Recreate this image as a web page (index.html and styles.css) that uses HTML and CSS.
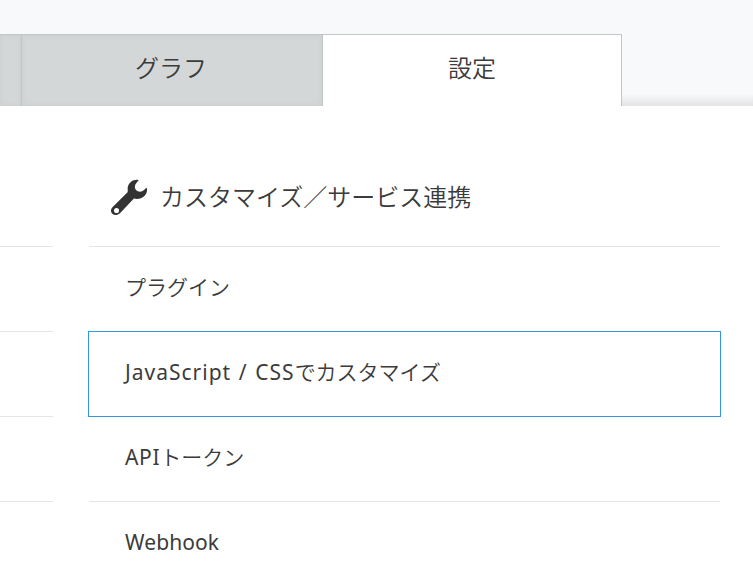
FILE: index.html
```html
<!DOCTYPE html>
<html lang="ja">
<head>
<meta charset="utf-8">
<title>設定</title>
<link rel="stylesheet" href="styles.css">
</head>
<body>
<nav class="tabs">
<div class="tab tab-first"></div>
<div class="tab"><span class="graph-label">グラフ</span></div>
<div class="tab active"><span>設定</span></div>
<div class="tab-space"></div>
</nav>
<main class="panel">
<section class="side"><div class="head"></div><div class="row"></div><div class="row"></div><div class="row"></div></section>
<section class="main">
<h2 class="head"><svg class="wrench" viewBox="0 0 40 40"><path fill-rule="evenodd" d="M29.500 2.200C25 .8 19.500 4 18.300 9c-.4 2 .2 4-.3 5.500L3 29.500c-4 4-1.500 8.500 3 8.500 2 0 3.500-1 5-2.500L24.500 21c3 1 7 .5 9.500-1.500 3.500-2.500 4.500-6 3.800-9.500-2.300 1-3.600 4-7.100 4-3 0-5.200-2-5.200-5 0-3 2.500-5 4-6.800zM6.700 30.700a2.600 2.600 0 1 0 0 5.200 2.600 2.600 0 0 0 0-5.200z" fill="#333"/></svg><span>カスタマイズ／サービス連携</span></h2>
<a class="row"><span>プラグイン</span></a>
<a class="row selected"><span><span class="latin script">JavaScript / CSS</span>でカスタマイズ</span></a>
<a class="row"><span><span class="latin api">API</span>トークン</span></a>
<a class="row last"><span class="latin hook">Webhook</span></a>
</section>
</main>
</body>
</html>
```
FILE: styles.css
```css
*{box-sizing:border-box}
body{margin:0;width:753px;height:579px;overflow:hidden;background:#f7f9fb;color:#3b3b3b;font-family:"Noto Sans CJK JP",sans-serif;font-weight:350}
.tabs{display:flex;height:106px;padding-top:34px}
.tab{width:301px;height:72px;background:#d4d7d7;border-top:1px solid #c4c7c8;border-right:1px solid #c2c6c6;box-shadow:inset 0 0 5px #c9cdcd;display:flex;align-items:center;justify-content:center;padding-bottom:8px;font-size:24px;white-space:nowrap}
.tab-first{width:22px}
.graph-label{margin-right:2px}
.tab.active{background:#fff;width:299px;box-shadow:none}
.tab-space{flex:1;background:linear-gradient(to bottom,transparent 83%,#e1e3e4)}
.panel{height:473px;background:#fff;display:flex;gap:36px}
.side{width:53px}
.main{width:631px}
.head{margin:0;height:141px;border-bottom:1px solid #e3e6e6;display:flex;align-items:center;padding:38px 0 0 21px;font-size:24px;font-weight:350;white-space:nowrap}
.side .head{padding:0}
.wrench{width:39px;height:39px;margin:4px 11px 0 0}
.row{height:85px;border-bottom:1px solid #e3e6e6;display:flex;align-items:center;padding:0 0 6px 36px;font-size:21px;white-space:nowrap}
.side .row{padding:0}
.row.selected{height:86px;margin:-1px -1px 0;border:1px solid #3498db}
.latin{font-family:"Noto Sans",sans-serif;font-weight:400}
.script{letter-spacing:1px;word-spacing:1.2px}
.api{letter-spacing:.7px}
.hook{letter-spacing:.1px}
.row.last{padding-bottom:5px;border-bottom:0}
```
